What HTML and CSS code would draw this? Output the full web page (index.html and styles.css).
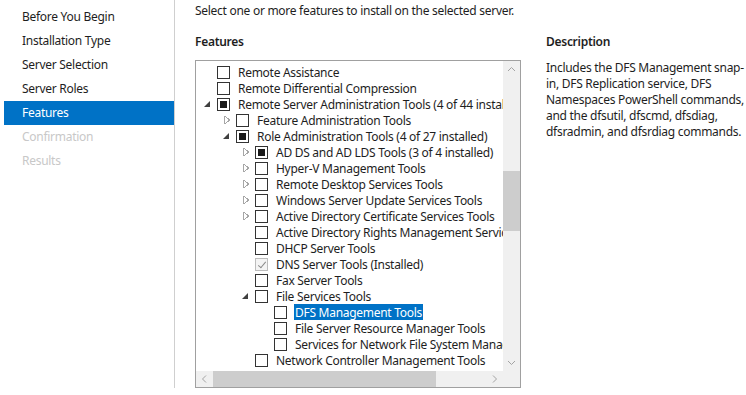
FILE: index.html
```html
<!DOCTYPE html>
<html>
<head>
<meta charset="utf-8">
<link rel="stylesheet" href="styles.css">
</head>
<body>
<div class="wizard">
  <nav class="steps">
    <div class="step">Before You Begin</div>
    <div class="step">Installation Type</div>
    <div class="step">Server Selection</div>
    <div class="step">Server Roles</div>
    <div class="step active">Features</div>
    <div class="step disabled">Confirmation</div>
    <div class="step disabled">Results</div>
  </nav>
  <main class="content">
    <p class="intro">Select one or more features to install on the selected server.</p>
    <div class="columns">
      <section class="features">
        <h2 class="heading">Features</h2>
        <div class="tree-box">
          <div class="tree-view">
            <div class="tree">
              <div class="row l1"><span class="exp"></span><span class="cb"></span><span class="label">Remote Assistance</span></div>
              <div class="row l1"><span class="exp"></span><span class="cb"></span><span class="label">Remote Differential Compression</span></div>
              <div class="row l1"><span class="exp open"></span><span class="cb ind"></span><span class="label">Remote Server Administration Tools (4 of 44 installed)</span></div>
              <div class="row l2"><span class="exp closed"></span><span class="cb"></span><span class="label">Feature Administration Tools</span></div>
              <div class="row l2"><span class="exp open"></span><span class="cb ind"></span><span class="label">Role Administration Tools (4 of 27 installed)</span></div>
              <div class="row l3"><span class="exp closed"></span><span class="cb ind"></span><span class="label">AD DS and AD LDS Tools (3 of 4 installed)</span></div>
              <div class="row l3"><span class="exp closed"></span><span class="cb"></span><span class="label">Hyper-V Management Tools</span></div>
              <div class="row l3"><span class="exp closed"></span><span class="cb"></span><span class="label">Remote Desktop Services Tools</span></div>
              <div class="row l3"><span class="exp closed"></span><span class="cb"></span><span class="label">Windows Server Update Services Tools</span></div>
              <div class="row l3"><span class="exp closed"></span><span class="cb"></span><span class="label">Active Directory Certificate Services Tools</span></div>
              <div class="row l3"><span class="exp"></span><span class="cb"></span><span class="label">Active Directory Rights Management Services Tools</span></div>
              <div class="row l3"><span class="exp"></span><span class="cb"></span><span class="label">DHCP Server Tools</span></div>
              <div class="row l3"><span class="exp"></span><span class="cb checked"></span><span class="label">DNS Server Tools (Installed)</span></div>
              <div class="row l3"><span class="exp"></span><span class="cb"></span><span class="label">Fax Server Tools</span></div>
              <div class="row l3"><span class="exp open"></span><span class="cb"></span><span class="label">File Services Tools</span></div>
              <div class="row l4"><span class="exp"></span><span class="cb"></span><span class="label selected">DFS Management Tools</span></div>
              <div class="row l4"><span class="exp"></span><span class="cb"></span><span class="label">File Server Resource Manager Tools</span></div>
              <div class="row l4"><span class="exp"></span><span class="cb"></span><span class="label">Services for Network File System Management Tools</span></div>
              <div class="row l3"><span class="exp"></span><span class="cb"></span><span class="label">Network Controller Management Tools</span></div>
            </div>
            <div class="vscroll">
              <svg class="arrow" width="17" height="17" viewBox="0 0 17 17"><path d="M5 10 L8.5 6.5 L12 10" fill="none" stroke="#a3a3a3" stroke-width="1"/></svg>
              <div class="vtrack"><div class="vthumb"></div></div>
              <svg class="arrow" width="17" height="17" viewBox="0 0 17 17"><path d="M5 7 L8.5 10.5 L12 7" fill="none" stroke="#a3a3a3" stroke-width="1"/></svg>
            </div>
          </div>
          <div class="hscroll">
            <svg class="arrow" width="17" height="16" viewBox="0 0 17 16"><path d="M10 4.5 L6.5 8 L10 11.5" fill="none" stroke="#a3a3a3" stroke-width="1"/></svg>
            <div class="htrack"><div class="hthumb"></div></div>
            <svg class="arrow" width="17" height="16" viewBox="0 0 17 16"><path d="M7 4.5 L10.5 8 L7 11.5" fill="none" stroke="#a3a3a3" stroke-width="1"/></svg>
            <div class="corner"></div>
          </div>
        </div>
      </section>
      <section class="description">
        <h2 class="heading">Description</h2>
        <p class="desc-text">Includes the DFS Management snap-in, DFS Replication service, DFS Namespaces PowerShell commands, and the dfsutil, dfscmd, dfsdiag, dfsradmin, and dfsrdiag commands.</p>
      </section>
    </div>
  </main>
</div>
</body>
</html>
```

FILE: styles.css
```css
* { box-sizing: border-box; }
html, body { margin: 0; padding: 0; background: #fff; }
body {
  font-family: "Noto Sans", "Open Sans", sans-serif;
  font-size: 12px;
  letter-spacing: -0.28px;
  color: #1e1e1e;
  width: 746px;
  height: 395px;
  overflow: hidden;
}
.wizard { display: flex; height: 388px; }
.steps {
  width: 177px;
  border-right: 1px solid #cfcfcf;
  padding: 5px 0 0 4px;
}
.step {
  height: 24px;
  line-height: 24px;
  padding-left: 18px;
  color: #1e1e1e;
}
.step.active { background: #0072c6; color: #fff; }
.step.disabled { color: #c8c8c8; }
.content { padding-left: 20px; flex: 1; }
.intro { margin: 3px 0 0; line-height: 16px; }
.columns { display: flex; margin-top: 15px; gap: 25px; }
.heading { margin: 0; font-size: 12px; font-weight: 600; line-height: 16px; height: 26px; color: #1e1e1e; }
.features { width: 326px; flex: none; }
.tree-box {
  border: 1px solid #a0a0a0;
  height: 328px;
  display: flex;
  flex-direction: column;
}
.tree-view { display: flex; height: 310px; }
.tree { flex: 1; overflow: hidden; padding-top: 3px; }
.row { display: flex; align-items: center; height: 16px; white-space: nowrap; }
.row.l1 { padding-left: 4px; }
.row.l2 { padding-left: 23px; }
.row.l3 { padding-left: 42px; }
.row.l4 { padding-left: 61px; }
.exp { width: 17px; height: 16px; flex: none; position: relative; }
.exp.open::after {
  content: "";
  position: absolute;
  left: 4px; top: 5px;
  width: 0; height: 0;
  border-style: solid;
  border-width: 0 0 6px 6px;
  border-color: transparent transparent #404040 transparent;
}
.exp.closed::after {
  content: "";
  position: absolute;
  left: 5px; top: 4px;
  width: 5px; height: 8px;
  background:
    linear-gradient(to top right, transparent 0 calc(50% - 0.7px), #a6a6a6 calc(50% - 0.7px) calc(50% + 0.3px), transparent calc(50% + 0.3px)) top/5px 4px no-repeat,
    linear-gradient(to bottom right, transparent 0 calc(50% - 0.7px), #a6a6a6 calc(50% - 0.7px) calc(50% + 0.3px), transparent calc(50% + 0.3px)) bottom/5px 4px no-repeat;
  border-left: 1px solid #a6a6a6;
}
.cb {
  width: 13px; height: 13px; flex: none;
  border: 1px solid #333;
  background: #fff;
  margin-right: 7px;
  position: relative;
}
.cb.ind::after {
  content: "";
  position: absolute;
  left: 2px; top: 2px; width: 7px; height: 7px;
  background: #1a1a1a;
}
.cb.checked { border-color: #bcbcbc; background: #f4f4f4; }
.cb.checked::after {
  content: "";
  position: absolute;
  left: 3.5px; top: 1px; width: 3px; height: 7px;
  border-right: 1.5px solid #8a8a8a;
  border-bottom: 1.5px solid #8a8a8a;
  transform: rotate(40deg);
}
.label { line-height: 16px; padding: 1px 1px 0; height: 16px; }
.label.selected { background: #0072c6; color: #fff; line-height: 15px; }
.vscroll {
  width: 17px; flex: none;
  background: #f0f0f0;
  display: flex; flex-direction: column;
}
.arrow { display: block; flex: none; }
.vtrack { flex: 1; padding-top: 93px; }
.vthumb { height: 60px; background: #cdcdcd; }
.hscroll {
  height: 16px; display: flex; background: #f0f0f0;
}
.htrack { flex: 1; }
.hthumb { width: 223px; height: 16px; background: #cdcdcd; }
.corner { width: 17px; background: #f0f0f0; }
.description { width: 200px; }
.desc-text { margin: 0; line-height: 16px; }
```
